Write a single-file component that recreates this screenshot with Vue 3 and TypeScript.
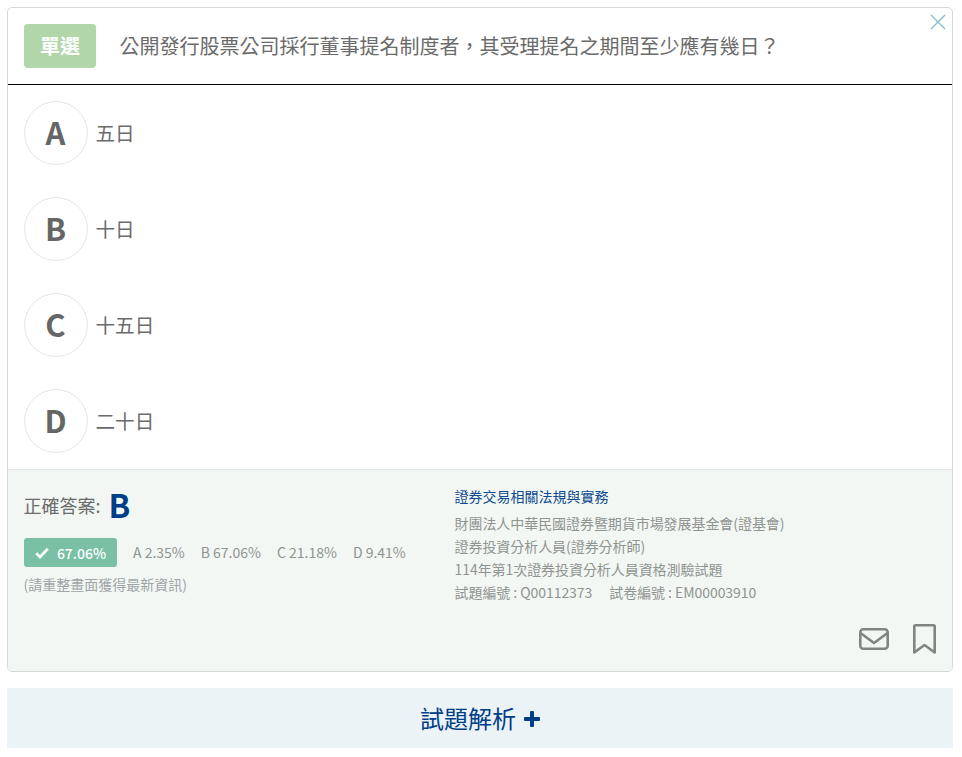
<script setup lang="ts">
const options = [
  { key: 'A', text: '五日' },
  { key: 'B', text: '十日' },
  { key: 'C', text: '十五日' },
  { key: 'D', text: '二十日' },
]
const stats = ['A 2.35%', 'B 67.06%', 'C 21.18%', 'D 9.41%']
</script>

<template>
  <div class="page">
    <section class="card">
      <header class="head">
        <span class="badge"><span class="badge-text">單選</span></span>
        <h1 class="question">公開發行股票公司採行董事提名制度者，其受理提名之期間至少應有幾日？</h1>
        <svg class="close" viewBox="0 0 16 16" width="16" height="16" fill="none" stroke="#7fbccb" stroke-width="1.3">
          <path d="M1 1 L15 15 M15 1 L1 15" />
        </svg>
      </header>

      <ul class="options">
        <li v-for="o in options" :key="o.key" class="option">
          <span class="circle"><span class="circle-key">{{ o.key }}</span></span>
          <span class="opt-text">{{ o.text }}</span>
        </li>
      </ul>

      <footer class="foot">
        <div class="foot-main">
          <div class="left">
            <div class="answer">
              <span class="answer-label">正確答案:</span>
              <span class="answer-key">B</span>
            </div>
            <div class="stats">
              <span class="rate">
                <svg viewBox="0 0 14 12" width="14" height="12" fill="none" stroke="#fff" stroke-width="2.7">
                  <path d="M1.2 6.2 L5 10 L12.8 1.8" />
                </svg>
                67.06%
              </span>
              <span v-for="s in stats" :key="s" class="stat">{{ s }}</span>
            </div>
            <div class="hint">(請重整畫面獲得最新資訊)</div>
          </div>
          <div class="right">
            <div class="subject">證券交易相關法規與實務</div>
            <div>財團法人中華民國證券暨期貨市場發展基金會(證基會)</div>
            <div>證券投資分析人員(證券分析師)</div>
            <div>114年第1次證券投資分析人員資格測驗試題</div>
            <div class="codes"><span>試題編號 : Q00112373</span><span>試卷編號 : EM00003910</span></div>
          </div>
        </div>
        <div class="actions">
          <svg viewBox="0 0 30 22" width="30" height="22" fill="none" stroke="#808581" stroke-width="2.6" stroke-linejoin="round">
            <rect x="1.3" y="1.3" width="27.4" height="19.4" rx="3" />
            <path d="M1.5 5 L15 15 L28.5 5" />
          </svg>
          <svg viewBox="0 0 23 30" width="23" height="30" fill="none" stroke="#808581" stroke-width="2.6" stroke-linejoin="round">
            <path d="M1.3 28.5 V2.6 Q1.3 1.3 2.6 1.3 H20.4 Q21.7 1.3 21.7 2.6 V28.5 L11.5 21 Z" />
          </svg>
        </div>
      </footer>
    </section>

    <button class="explain" type="button"><span class="explain-text">試題解析</span><span class="plus"></span></button>
  </div>
</template>

<style>
body {
  margin: 0;
  background: #fff;
}
</style>

<style scoped>
.page {
  padding: 7px 9px 9px 7px;
  font-family: "Noto Sans CJK TC", "Noto Sans", sans-serif;
  color: #666;
}
.card {
  border: 1px solid #d6d8d8;
  border-radius: 5px;
  overflow: hidden;
}
.head {
  position: relative;
  display: flex;
  align-items: center;
  gap: 24px;
  height: 76px;
  padding: 0 16px;
  border-bottom: 1px solid #000;
}
.badge {
  display: flex;
  align-items: center;
  justify-content: center;
  width: 72px;
  height: 44px;
  border-radius: 4px;
  background: #b0d6a9;
  color: #fff;
  font-size: 20px;
  font-weight: 700;
}
.badge-text {
  margin-bottom: 1px;
}
.question {
  margin: 0 0 1px -0.5px;
  font-size: 20px;
  font-weight: 400;
  color: #6b6b6b;
}
.close {
  position: absolute;
  top: 6px;
  right: 6px;
}
.options {
  list-style: none;
  margin: 0;
  padding: 16px 16px 0;
  display: flex;
  flex-direction: column;
  gap: 32px;
  box-sizing: border-box;
  height: 384px;
}
.option {
  display: flex;
  align-items: center;
  gap: 8px;
  height: 64px;
}
.circle {
  display: flex;
  align-items: center;
  justify-content: center;
  width: 64px;
  height: 64px;
  box-sizing: border-box;
  border: 1px solid #e4e4e4;
  border-radius: 50%;
  font-size: 31px;
  font-weight: 700;
  color: #666;
}
.circle-key {
  margin: 0 1px 4px 0;
}
.opt-text {
  font-size: 19.6px;
  color: #6b6b6b;
  margin: 0 0 2px -0.5px;
}
.foot {
  background: #f2f7f3;
  border-top: 1px solid #e3e7e5;
  height: 202px;
  padding: 16px 16px 17px;
  box-sizing: border-box;
  display: flex;
  flex-direction: column;
  justify-content: space-between;
}
.foot-main {
  display: flex;
  gap: 48px;
}
.left {
  width: 383px;
}
.answer {
  display: flex;
  align-items: center;
  gap: 8px;
  height: 40px;
}
.answer-label {
  font-size: 18px;
  color: #6b6b6b;
  margin: -3px 0 0 -0.5px;
}
.answer-key {
  font-size: 32px;
  line-height: 40px;
  font-weight: 700;
  color: #003e88;
  margin-top: -4px;
}
.stats {
  display: flex;
  align-items: center;
  gap: 16px;
  margin-top: 12px;
  font-size: 14px;
  color: #8f9491;
}
.rate {
  display: flex;
  align-items: center;
  justify-content: center;
  gap: 8px;
  width: 93px;
  height: 29px;
  border-radius: 3px;
  background: #79c0a5;
  color: #fff;
  font-weight: 500;
}
.stat {
  margin-top: -1px;
}
.hint {
  margin: 7px 0 0 -0.5px;
  font-size: 14px;
  color: #a0a5a8;
}
.right {
  font-size: 14px;
  line-height: 23px;
  color: #8f9491;
  letter-spacing: -0.06px;
  margin: -1px 0 0 -0.5px;
}
.subject {
  color: #0f4a90;
  line-height: 24px;
  margin-top: -1px;
  margin-bottom: 4px;
  letter-spacing: 0;
}
.codes {
  display: flex;
  gap: 17px;
}
.actions {
  display: flex;
  justify-content: flex-end;
  align-items: center;
  gap: 24px;
}
.explain {
  display: flex;
  align-items: center;
  justify-content: center;
  gap: 8px;
  width: 100%;
  height: 60px;
  margin-top: 16px;
  border: 0;
  background: #ebf3f7;
  color: #003e88;
  font-family: inherit;
  font-size: 24px;
}
.explain-text {
  margin-bottom: 2px;
}
.plus {
  position: relative;
  display: inline-block;
  width: 16px;
  height: 16px;
  margin-top: 2px;
}
.plus::before,
.plus::after {
  content: "";
  position: absolute;
  background: #003e88;
  border-radius: 1px;
}
.plus::before {
  left: 0;
  right: 0;
  top: 6px;
  height: 4px;
}
.plus::after {
  top: 0;
  bottom: 0;
  left: 6px;
  width: 4px;
}
</style>
